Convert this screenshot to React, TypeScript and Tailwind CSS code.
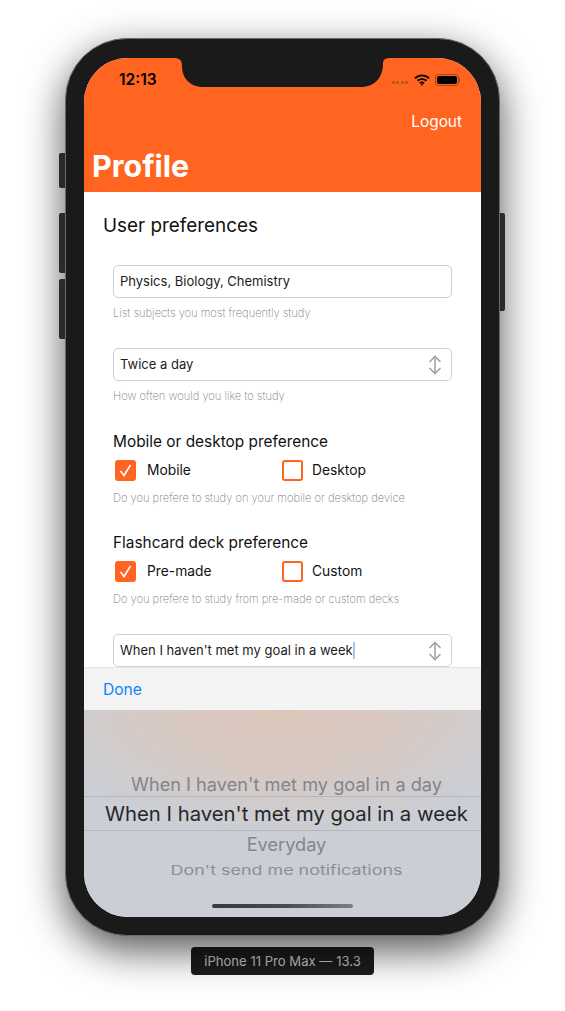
import { ReactNode } from "react"

function UpDownIcon() {
  return (
    <svg width="14" height="20" viewBox="0 0 14 20" fill="none" stroke="#a3a3a3" strokeWidth="1.6" className="shrink-0">
      <path d="M1.5 7 L7 1.5 L12.5 7" />
      <path d="M1.5 13 L7 18.5 L12.5 13" />
      <path d="M7 2 V18" />
    </svg>
  )
}

function Checkbox({ checked }: { checked?: boolean }) {
  return (
    <div
      className={`flex h-[21px] w-[21px] items-center justify-center rounded-[3px] border-2 border-[#ff6420] ${
        checked ? "bg-[#ff6420]" : "bg-white"
      }`}
    >
      {checked && (
        <svg width="15" height="15" viewBox="0 0 15 15" fill="none" stroke="white" strokeWidth="1.6">
          <path d="M2.5 8 L6 12.5 L12.5 2" />
        </svg>
      )}
    </div>
  )
}

function Field({ children, select }: { children: ReactNode; select?: boolean }) {
  return (
    <div className="flex h-[33px] items-center justify-between rounded-[5px] border border-[#cfcfcf] bg-white pl-[6px] pr-[9px] text-[13px] text-[#1c1c1c]">
      <div className="flex items-center">{children}</div>
      {select && <UpDownIcon />}
    </div>
  )
}

function Helper({ children }: { children: ReactNode }) {
  return <p className="mt-[7px] h-[16px] text-[11.1px] leading-[16px] font-extralight text-[#7d7d7d]">{children}</p>
}

function CheckGroup({ title, left, right, hint }: { title: string; left: string; right: string; hint: string }) {
  return (
    <div>
      <h3 className="h-[22px] pt-[1px] text-[15.4px] leading-[22px] text-[#111]">{title}</h3>
      <div className="mt-[7px] flex h-[22px] items-center pl-[2px] text-[13.8px] text-[#111]">
        <div className="flex w-[167px] items-center gap-[11px]">
          <Checkbox checked />
          <span>{left}</span>
        </div>
        <div className="flex items-center gap-[9px]">
          <Checkbox />
          <span>{right}</span>
        </div>
      </div>
      <div className="pt-[2px]">
        <Helper>{hint}</Helper>
      </div>
    </div>
  )
}

function StatusBar() {
  return (
    <div className="flex h-[44px] items-center justify-between pb-[1px] pl-[35px] pr-[21px] text-black">
      <span className="text-[15.5px] font-semibold">12:13</span>
      <div className="flex items-center gap-[5px]">
        <div className="mr-[1px] flex gap-[1.5px] pt-[5px]">
          <span className="h-[3px] w-[3px] rounded-full bg-[#b9501d]" />
          <span className="h-[3px] w-[3px] rounded-full bg-[#b9501d]" />
          <span className="h-[3px] w-[3px] rounded-full bg-[#b9501d]" />
          <span className="h-[3px] w-[3px] rounded-full bg-[#b9501d]" />
        </div>
        <svg width="16" height="12" viewBox="0 0 16 12" fill="none" stroke="black" strokeWidth="1.9">
          <path d="M1 4.2 C5 0.4 11 0.4 15 4.2" />
          <path d="M3.6 6.8 C6 4.6 10 4.6 12.4 6.8" />
          <path d="M6 9.2 C7.2 8.2 8.8 8.2 10 9.2" />
          <circle cx="8" cy="10.6" r="0.9" fill="black" stroke="none" />
        </svg>
        <div className="flex items-center">
          <div className="h-[12px] w-[24px] rounded-[3px] border border-[#a8491c] p-[1px]">
            <div className="h-full w-full rounded-[2px] bg-black" />
          </div>
          <span className="h-[4px] w-[1px] bg-[#a8491c]" />
        </div>
      </div>
    </div>
  )
}

export default function App() {
  return (
    <div className="flex h-[1011px] w-[565px] flex-col items-center overflow-hidden bg-white pt-[38px] [font-family:Inter,'Liberation_Sans',sans-serif]">
      <div className="relative flex h-[898px] w-[435px] shrink-0 rounded-[62px] border border-[#6b6b6b] bg-[#1a1a1a] px-[18px] pt-[19px] pb-[18px] shadow-[0_14px_40px_rgba(0,0,0,0.68)]">
        {/* side buttons */}
        <div className="absolute -left-[7px] top-[114px] h-[35px] w-[6px] rounded-l-[2px] bg-[#2a2a2a]" />
        <div className="absolute -left-[7px] top-[174px] h-[60px] w-[6px] rounded-l-[2px] bg-[#2a2a2a]" />
        <div className="absolute -left-[7px] top-[240px] h-[60px] w-[6px] rounded-l-[2px] bg-[#2a2a2a]" />
        <div className="absolute -right-[6px] top-[174px] h-[98px] w-[5px] rounded-r-[2px] bg-[#2a2a2a]" />

        <div className="relative flex flex-1 flex-col overflow-hidden rounded-[44px] bg-white">
          {/* notch */}
          <svg width="220" height="30" viewBox="0 0 220 30" fill="#1a1a1a" className="absolute left-[88px] top-0">
            <path d="M0 0 H220 C213 0 211 1 211 6 C211 20 202 29 189 29 H31 C18 29 10 20 10 8 C10 1 7 0 0 0 Z" />
          </svg>

          <header className="h-[134px] shrink-0 bg-[#ff6420]">
            <StatusBar />
            <div className="flex justify-end pr-[19px] pt-[7px] text-[15.4px] leading-[26px] text-white">Logout</div>
            <h1 className="pl-[8px] pt-[11px] text-[30.5px] leading-[40px] font-bold text-white">Profile</h1>
          </header>

          <main className="flex-1 overflow-hidden">
            <h2 className="pl-[19px] pt-[21px] text-[18.9px] leading-[26px] text-[#111]">User preferences</h2>
            <div className="flex flex-col px-[29px] pt-[26px]">
              <Field>Physics, Biology, Chemistry</Field>
              <Helper>List subjects you most frequently study</Helper>
              <div className="mt-[27px]">
                <Field select>Twice a day</Field>
                <Helper>How often would you like to study</Helper>
              </div>
              <div className="mt-[26px]">
                <CheckGroup
                  title="Mobile or desktop preference"
                  left="Mobile"
                  right="Desktop"
                  hint="Do you prefere to study on your mobile or desktop device"
                />
              </div>
              <div className="mt-[25px]">
                <CheckGroup
                  title="Flashcard deck preference"
                  left="Pre-made"
                  right="Custom"
                  hint="Do you prefere to study from pre-made or custom decks"
                />
              </div>
              <div className="mt-[27px]">
                <Field select>
                  When I haven't met my goal in a week
                  <span className="ml-[0.5px] h-[17px] w-[2px] bg-[#a9c4f0]" />
                </Field>
              </div>
            </div>
          </main>

          <div className="flex h-[43px] shrink-0 items-center border-t border-[#e4e4e4] bg-[#f4f3f3] pl-[19px] pt-[1px] text-[15.6px] text-[#0a84ff]">
            Done
          </div>

          {/* picker */}
          <div className="flex h-[207px] shrink-0 flex-col items-center bg-[radial-gradient(ellipse_62%_58%_at_50%_0%,#dcc6bb_0%,#d7c9c3_50%,#cbced4_100%)] pt-[62px]">
            <div className="h-[24px] pl-[8px] text-[18.2px] leading-[24px] whitespace-nowrap text-[#84848a]">
              When I haven't met my goal in a day
            </div>
            <div className="flex h-[35px] w-full items-center justify-center border-y border-[#b4b6bb] pl-[8px] pt-[1px] text-[20.3px] whitespace-nowrap text-[#26262a]">
              When I haven't met my goal in a week
            </div>
            <div className="h-[26px] pl-[8px] text-[18.2px] leading-[26px] text-[#85868a]">Everyday</div>
            <div className="h-[24px] scale-y-[0.72] pl-[8px] pt-[1px] text-[17.9px] leading-[26px] whitespace-nowrap text-[#8d8e93]">
              Don't send me notifications
            </div>
            <div className="mt-[23px] h-[4px] w-[141px] rounded-full bg-gradient-to-r from-[#3a3a3c] via-[#4a4a4c] to-[#7d7e82]" />
          </div>
        </div>
      </div>

      <div className="mt-[11px] flex h-[28px] w-[183px] shrink-0 items-center justify-center rounded-[4px] bg-[#1c1c1c] pt-[1px] text-[13.1px] text-[#c8c8c8]">
        iPhone 11 Pro Max — 13.3
      </div>
    </div>
  )
}
